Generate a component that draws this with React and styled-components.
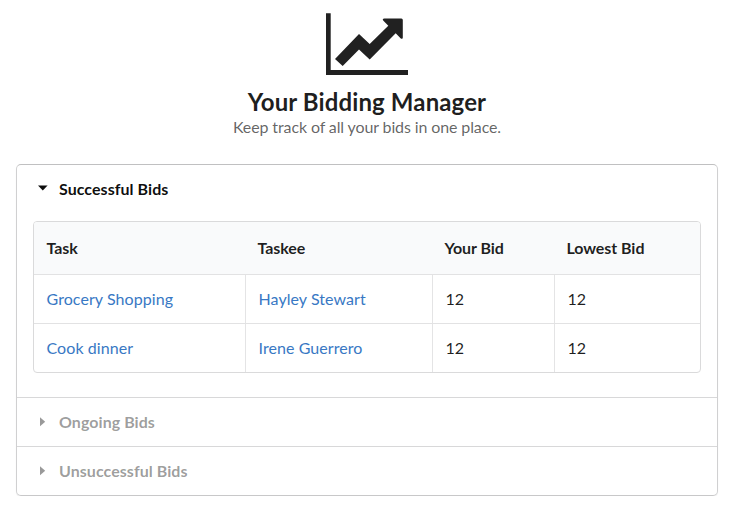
import React from 'react';
import styled, { createGlobalStyle } from 'styled-components';

const GlobalStyle = createGlobalStyle`
  *, *::before, *::after { box-sizing: border-box; }
  body {
    margin: 0;
    background: #fff;
    color: rgba(0, 0, 0, 0.88);
    font-family: Lato, 'Liberation Sans', sans-serif;
    font-size: 16px;
    line-height: 20px;
    overflow: hidden;
  }
`;

const Page = styled.main`
  padding: 12px 15px 0 16px;
`;

const Header = styled.header`
  display: flex;
  flex-direction: column;
  align-items: center;
  text-align: center;
`;

const ChartIcon = styled.svg`
  display: block;
  width: 84px;
  height: 64px;
`;

const Title = styled.h2`
  margin: 11px 0 0;
  font-size: 24px;
  line-height: 30px;
  font-weight: 700;
  letter-spacing: 0.12px;
`;

const Subtitle = styled.p`
  margin: 0;
  font-size: 16px;
  line-height: 20px;
  letter-spacing: -0.12px;
  color: rgba(0, 0, 0, 0.62);
`;

const Accordion = styled.section`
  margin-top: 27px;
  border: 1px solid #d0d0d1;
  border-top-color: #c0c0c1;
  border-bottom-color: #c8c8c9;
  border-radius: 5px;
  box-shadow: 0 1px 1px rgba(34, 36, 38, 0.08);
`;

const Panel = styled.div`
  & + & { border-top: 1px solid #d8d8d9; }
`;

const PanelTitle = styled.button`
  display: flex;
  align-items: center;
  width: 100%;
  height: 48px;
  padding: 0 20px;
  border: 0;
  background: none;
  font: 700 16px/20px Lato, 'Liberation Sans', sans-serif;
  letter-spacing: 0.05px;
  color: ${(p) => (p.$open ? 'rgba(0, 0, 0, 0.95)' : 'rgba(0, 0, 0, 0.4)')};
`;

const Caret = styled.svg`
  width: 12px;
  height: 12px;
  margin-right: 10px;
  fill: currentColor;
`;

const PanelBody = styled.div`
  padding: 8px 16px 24px;
`;

const Table = styled.div`
  border: 1px solid #dadadb;
  border-radius: 4px;
  overflow: hidden;
`;

const Row = styled.div`
  display: grid;
  grid-template-columns: 211px 187px 122px 1fr;
  height: 49px;
  border-top: 1px solid #e2e2e3;
`;

const HeadRow = styled(Row)`
  height: 52px;
  border-top: 0;
  background: #f9fafb;
  font-weight: 700;
`;

const HeadCell = styled.div`
  display: flex;
  align-items: center;
  padding-left: 12.4px;
  letter-spacing: -0.06px;
`;

const Cell = styled.div`
  display: flex;
  align-items: center;
  padding-left: 12.5px;
  border-left: 1px solid #e4e4e5;

  &:first-child { border-left: 0; }
`;

const Link = styled.a`
  color: #3878c4;
  letter-spacing: 0.07px;
  text-decoration: none;
`;

const columns = ['Task', 'Taskee', 'Your Bid', 'Lowest Bid'];

const bids = [
  { task: 'Grocery Shopping', taskee: 'Hayley Stewart', bid: 12, lowest: 12 },
  { task: 'Cook dinner', taskee: 'Irene Guerrero', bid: 12, lowest: 12 },
];

function AccordionTitle({ open, children }) {
  return (
    <PanelTitle $open={open} aria-expanded={!!open}>
      <Caret viewBox="0 0 12 12">
        <path d={open ? 'M1 2.500H10.600L5.800 7.500Z' : 'M3 1.200V10.300L8.200 5.750Z'} />
      </Caret>
      {children}
    </PanelTitle>
  );
}

export default function App() {
  return (
    <Page>
      <GlobalStyle />
      <Header>
        <ChartIcon viewBox="0 0 84 64" fill="#212121">
          <path d="M1 1.200H5.700V58H83V63H1Z" />
          <path d="M10 47L17.700 53.900L34 37.600L44.700 47.400L70.700 21.200L75.800 26.400Q77.800 27.400 77.800 25.500V8Q77.800 6.600 76.400 6.500H59.400Q57 6.700 58.200 8.400L63.300 13.700L44.700 32L34 22Z" />
        </ChartIcon>
        <Title>Your Bidding Manager</Title>
        <Subtitle>Keep track of all your bids in one place.</Subtitle>
      </Header>
      <Accordion>
        <Panel>
          <AccordionTitle open>Successful Bids</AccordionTitle>
          <PanelBody>
            <Table>
              <HeadRow>
                {columns.map((name) => (
                  <HeadCell key={name}>{name}</HeadCell>
                ))}
              </HeadRow>
              {bids.map((b) => (
                <Row key={b.task}>
                  <Cell><Link>{b.task}</Link></Cell>
                  <Cell><Link>{b.taskee}</Link></Cell>
                  <Cell>{b.bid}</Cell>
                  <Cell>{b.lowest}</Cell>
                </Row>
              ))}
            </Table>
          </PanelBody>
        </Panel>
        <Panel><AccordionTitle>Ongoing Bids</AccordionTitle></Panel>
        <Panel><AccordionTitle>Unsuccessful Bids</AccordionTitle></Panel>
      </Accordion>
    </Page>
  );
}
